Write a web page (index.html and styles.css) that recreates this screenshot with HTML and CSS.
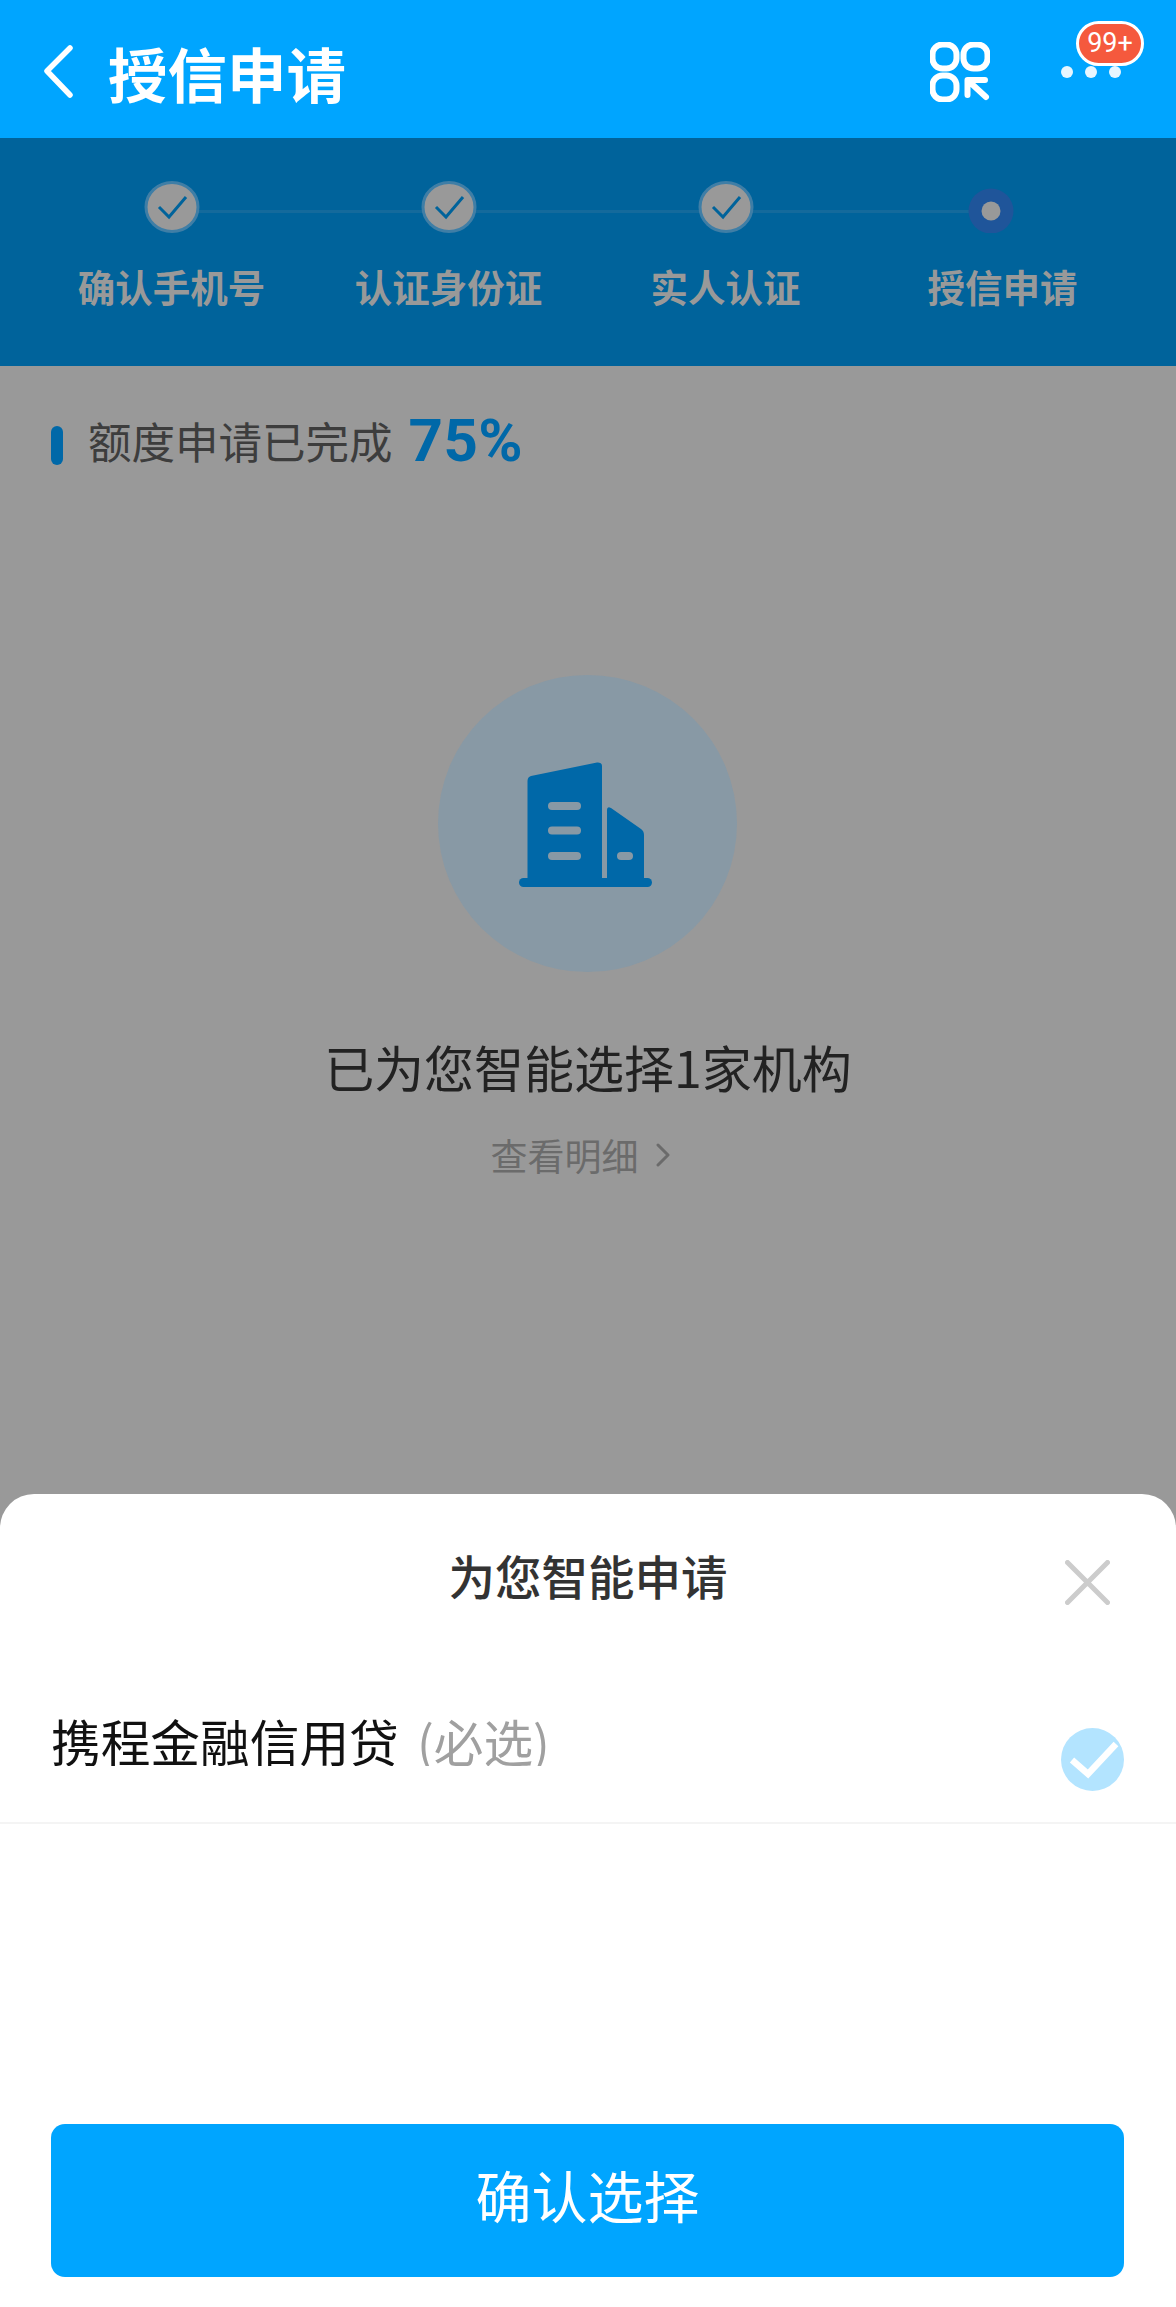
FILE: index.html
```html
<!DOCTYPE html>
<html lang="zh-CN">
<head>
<meta charset="utf-8">
<title>授信申请</title>
<link rel="stylesheet" href="styles.css">
</head>
<body>
<div class="page">
  <header class="topbar">
    <svg class="back" viewBox="0 0 32 54" width="32" height="54"><path d="M27 3 L4 26 L27 50"/></svg>
    <h1 class="title">授信申请</h1>
    <svg class="appgrid" viewBox="0 0 60 60" width="60" height="60">
      <rect x="2.5" y="2.5" width="24" height="24" rx="10"/>
      <rect x="33.5" y="2.5" width="24" height="24" rx="10"/>
      <rect x="2.5" y="33.5" width="24" height="24" rx="10"/>
      <path d="M37.5 53 V38 H55 M38 38.5 L56 55"/>
    </svg>
    <div class="more">
      <i class="more-dot"></i><i class="more-dot"></i><i class="more-dot"></i>
      <span class="badge">99+</span>
    </div>
  </header>

  <section class="steps">
    <div class="steps-line"></div>
    <div class="step">
      <svg class="step-icon" viewBox="0 0 56 52" width="56" height="52"><ellipse class="step-disc" cx="28" cy="26" rx="26" ry="24.5"/><path class="step-check" d="M15 26 L25 36 L42 16"/></svg>
      <span class="step-label">确认手机号</span>
    </div>
    <div class="step">
      <svg class="step-icon" viewBox="0 0 56 52" width="56" height="52"><ellipse class="step-disc" cx="28" cy="26" rx="26" ry="24.5"/><path class="step-check" d="M15 26 L25 36 L42 16"/></svg>
      <span class="step-label">认证身份证</span>
    </div>
    <div class="step">
      <svg class="step-icon" viewBox="0 0 56 52" width="56" height="52"><ellipse class="step-disc" cx="28" cy="26" rx="26" ry="24.5"/><path class="step-check" d="M15 26 L25 36 L42 16"/></svg>
      <span class="step-label">实人认证</span>
    </div>
    <div class="step">
      <svg class="step-icon step-icon-current" viewBox="0 0 46 52" width="46" height="52"><circle class="step-halo" cx="23" cy="30" r="22.5"/><circle class="step-core" cx="23" cy="30" r="9.5"/></svg>
      <span class="step-label">授信申请</span>
    </div>
  </section>

  <section class="progress">
    <i class="progress-bar"></i>
    <span class="progress-text">额度申请已完成</span>
    <span class="progress-pct">75%</span>
  </section>

  <section class="result">
    <div class="result-disc">
      <svg viewBox="0 0 133 125" width="133" height="125">
        <path class="bld" d="M8.5 120 V19 Q8.5 15 12 14 L78 0.5 Q83 0 83 4 V120 Z"/>
        <path class="bld" d="M88 120 V48 Q88 44 92 46 L122 67 Q125 69 125 73 V120 Z"/>
        <rect class="bld" x="0" y="116" width="133" height="9" rx="4.5"/>
        <rect class="win" x="29" y="40" width="33" height="8" rx="4"/>
        <rect class="win" x="29" y="64.5" width="33" height="8" rx="4"/>
        <rect class="win" x="29" y="90" width="33" height="8" rx="4"/>
        <rect class="win" x="98" y="90" width="16" height="8" rx="4"/>
      </svg>
    </div>
    <h2 class="result-title">已为您智能选择1家机构</h2>
    <div class="result-link">
      <span>查看明细</span>
      <svg viewBox="0 0 14 24" width="14" height="24"><path d="M2 2 L12 12 L2 22"/></svg>
    </div>
  </section>

  <aside class="sheet">
    <div class="sheet-head">
      <span></span>
      <h3 class="sheet-title">为您智能申请</h3>
      <svg class="sheet-close" viewBox="0 0 45 45" width="45" height="45"><path d="M2.5 2.5 L42.5 42.5 M42.5 2.5 L2.5 42.5"/></svg>
    </div>
    <div class="option">
      <div class="option-name">携程金融信用贷 <span class="option-note">(必选)</span></div>
      <svg class="option-check" viewBox="0 0 63 63" width="63" height="63"><circle cx="31.5" cy="31.5" r="31.5"/><path d="M11 32 L27 46 L55 16"/></svg>
    </div>
    <button class="confirm">确认选择</button>
  </aside>
</div>
</body>
</html>
```
FILE: styles.css
```css
* { box-sizing: border-box; }
html, body { margin: 0; padding: 0; }
body {
  font-family: "Noto Sans CJK SC", "Noto Sans", sans-serif;
  background: #999999;
}
h1, h2, h3 { margin: 0; font-weight: 400; }
i { display: block; }

.page {
  position: relative;
  width: 1176px;
  height: 2307px;
  overflow: hidden;
  background: #999999;
}

/* top bar */
.topbar {
  height: 138px;
  padding-top: 6px;
  background: #00a5ff;
  display: flex;
  align-items: center;
}
.back { margin-left: 43px; flex: none; }
.back path { fill: none; stroke: #fff; stroke-width: 5.5; stroke-linecap: round; stroke-linejoin: round; }
.title {
  margin-left: 33px;
  font-size: 59.5px;
  line-height: 70px;
  font-weight: 700;
  color: #fff;
  flex: 1;
}
.appgrid { flex: none; margin-right: 1px; }
.appgrid rect { fill: none; stroke: #fff; stroke-width: 6; }
.appgrid path { fill: none; stroke: #fff; stroke-width: 6; stroke-linecap: round; stroke-linejoin: round; }
.more {
  position: relative;
  margin-left: 70px;
  margin-right: 55px;
  display: flex;
  gap: 12px;
}
.more-dot { width: 12px; height: 12px; border-radius: 50%; background: #e8f6ff; }
.badge {
  position: absolute;
  left: 15px;
  top: -45px;
  width: 68px;
  height: 45px;
  border: 3px solid #fff;
  border-radius: 23px;
  background: #f5593d;
  color: #fff;
  font-family: Roboto, sans-serif;
  font-size: 27px;
  line-height: 39px;
  text-align: center;
}

/* step bar */
.steps {
  position: relative;
  height: 228px;
  padding: 43px 33px 0;
  background: #00639b;
  display: grid;
  grid-template-columns: repeat(4, 277px);
}
.steps-line {
  position: absolute;
  left: 171px;
  top: 72px;
  width: 819px;
  height: 3px;
  background: #146a9c;
}
.step { position: relative; display: flex; flex-direction: column; align-items: center; }
.step-icon { display: block; flex: none; }
.step-icon-current { margin-right: 24px; }
.step-disc { fill: #999999; stroke: #3f7ea6; stroke-width: 3; }
.step-check { fill: none; stroke: #00639b; stroke-width: 3; }
.step-halo { fill: #1f559a; }
.step-core { fill: #999999; }
.step-label {
  margin-top: 31px;
  font-size: 37.5px;
  line-height: 44px;
  font-weight: 700;
  color: #999999;
  white-space: nowrap;
}

/* progress */
.progress {
  display: flex;
  align-items: flex-start;
  height: 100px;
  padding: 52px 0 0 51px;
}
.progress-bar { width: 12px; height: 39px; margin-top: 8px; border-radius: 6px; background: #0068a8; }
.progress-text { margin-left: 25px; margin-top: -1px; font-size: 43.5px; line-height: 48px; color: #3d3d3d; }
.progress-pct {
  margin-left: 16px;
  margin-top: -1px;
  font-family: Roboto, sans-serif;
  font-size: 60px;
  line-height: 48px;
  font-weight: 700;
  letter-spacing: 0.5px;
  color: #0068a8;
}

/* centre result */
.result {
  display: flex;
  flex-direction: column;
  align-items: center;
  padding-top: 209px;
}
.result-disc {
  width: 299px;
  height: 297px;
  border-radius: 50%;
  background: #8899a5;
  display: flex;
  align-items: center;
  justify-content: center;
  padding: 2px 4px 0 0;
  margin-right: 1px;
}
.bld { fill: #0068a8; }
.win { fill: #8899a5; }
.result-title {
  margin-top: 64px;
  font-size: 50px;
  line-height: 60px;
  color: #222222;
}
.result-link {
  margin-top: 35px;
  display: flex;
  align-items: center;
  gap: 17px;
  margin-right: 16px;
  font-size: 37px;
  line-height: 48px;
  color: #6b6b6b;
}
.result-link svg { fill: none; stroke: #6b6b6b; stroke-width: 3; stroke-linecap: round; stroke-linejoin: round; }

/* bottom sheet */
.sheet {
  position: absolute;
  left: 0;
  right: 0;
  top: 1494px;
  bottom: 0;
  background: #fff;
  border-radius: 34px 34px 0 0;
  display: flex;
  flex-direction: column;
}
.sheet-head {
  display: grid;
  grid-template-columns: 1fr auto 1fr;
  align-items: start;
  padding: 57px 66px 0;
}
.sheet-title { font-size: 46.5px; line-height: 48px; font-weight: 500; color: #333333; }
.sheet-close { justify-self: end; margin-top: 9px; }
.sheet-close path { fill: none; stroke: #cccccc; stroke-width: 5; stroke-linecap: round; }
.option {
  display: flex;
  justify-content: space-between;
  align-items: flex-start;
  margin-top: 103px;
  padding: 0 52px 31px 51px;
  border-bottom: 2px solid #f4f4f4;
}
.option-name {
  height: 58px;
  overflow: hidden;
  font-size: 49.7px;
  line-height: 65px;
  color: #111111;
}
.option-note { margin-left: 7px; color: #a0a0a0; }
.option-check { margin-top: 20px; flex: none; }
.option-check circle { fill: #b3e4ff; }
.option-check path { fill: none; stroke: #fff; stroke-width: 6.5; }
.confirm {
  display: block;
  width: 1073px;
  height: 153px;
  margin: auto 0 30px 51px;
  padding: 0 0 14px;
  border: 0;
  border-radius: 14px;
  background: #00a5ff;
  color: #fff;
  font-family: inherit;
  font-size: 56px;
  line-height: 70px;
}
```
